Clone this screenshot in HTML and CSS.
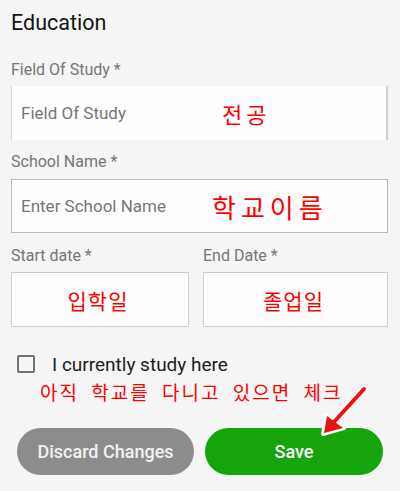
FILE: index.html
```html
<!DOCTYPE html>
<html lang="ko">
<head>
<meta charset="utf-8">
<title>Education</title>
<link rel="stylesheet" href="styles.css">
</head>
<body>
<div class="page">
  <h1 class="title">Education</h1>

  <div class="label first">Field Of Study *</div>
  <div class="field field-open">
    <span class="ph ph-study">Field Of Study</span>
    <span class="note note-study">전공</span>
  </div>

  <div class="label">School Name *</div>
  <div class="field field-school">
    <span class="ph ph-school">Enter School Name</span>
    <span class="note note-school">학교이름</span>
  </div>

  <div class="dates">
    <div class="date-col">
      <div class="label">Start date *</div>
      <div class="field date-box"><span class="note note-date">입학일</span></div>
    </div>
    <div class="date-col">
      <div class="label">End Date *</div>
      <div class="field date-box"><span class="note note-date">졸업일</span></div>
    </div>
  </div>

  <label class="check-row">
    <span class="checkbox"></span>
    <span class="check-text">I currently study here</span>
  </label>

  <div class="hint">아직 학교를 다니고 있으면 체크</div>

  <div class="actions">
    <button class="btn btn-discard">Discard Changes</button>
    <button class="btn btn-save">Save</button>
  </div>

  <svg class="arrow" width="400" height="491" viewBox="0 0 400 491">
    <line x1="364" y1="389" x2="334" y2="422" stroke="#fff" stroke-width="7" stroke-linecap="round"/>
    <polygon points="323,434 326,415 344,428" fill="#fff" stroke="#fff" stroke-width="4" stroke-linejoin="round"/>
    <line x1="364" y1="389" x2="334" y2="422" stroke="#ee1111" stroke-width="4" stroke-linecap="round"/>
    <polygon points="324,433 327,416 343,428" fill="#ee1111"/>
  </svg>
</div>
</body>
</html>
```

FILE: styles.css
```css
html, body {
  margin: 0;
  padding: 0;
  background: #f4f5f4;
}

.page {
  position: relative;
  width: 400px;
  height: 491px;
  box-sizing: border-box;
  padding: 11px 12px 0 11px;
  font-family: Roboto, "Liberation Sans", sans-serif;
  overflow: hidden;
}

.title {
  margin: 0;
  font-size: 21.5px;
  line-height: 24px;
  font-weight: 400;
  color: #151515;
}

.label {
  margin-top: 13px;
  font-size: 16px;
  line-height: 18px;
  color: #767676;
}

.label.first {
  margin-top: 26px;
}

.field {
  box-sizing: border-box;
  background: #fefefe;
  border: 1px solid #b9b9b9;
  display: flex;
  align-items: center;
  margin-top: 8px;
}

.field-open {
  margin-top: 7px;
  height: 54px;
  border-top: none;
  border-bottom: none;
  border-left: 1px solid #d8d8d8;
  border-right: 2px solid #cfcfcf;
}

.field-school {
  height: 54px;
}

.ph {
  font-size: 17px;
  color: #767676;
  padding-left: 9px;
  flex: 0 0 auto;
}

.ph-study {
  width: 201px;
}

.ph-school {
  width: 191px;
}

.note {
  font-family: "Noto Sans CJK KR", sans-serif;
  color: #ff0000;
  white-space: nowrap;
}

.note-study {
  font-size: 22px;
  letter-spacing: 4px;
}

.note-school {
  font-size: 26px;
  letter-spacing: 5px;
}

.dates {
  display: grid;
  grid-template-columns: 178px 1fr;
  column-gap: 14px;
}

.dates .label {
  margin-top: 14px;
}

.date-box {
  height: 55px;
  margin-top: 7px;
  justify-content: center;
  border-color: #cdcdcd;
}

.note-date {
  font-size: 21px;
  letter-spacing: 1px;
  margin-right: 4px;
}

.check-row {
  display: flex;
  align-items: center;
  height: 24px;
  margin-top: 25px;
  padding-left: 6px;
}

.checkbox {
  box-sizing: border-box;
  width: 18px;
  height: 18px;
  border: 2px solid #727272;
  border-radius: 2px;
  flex: 0 0 auto;
}

.check-text {
  margin-left: 17px;
  font-size: 19px;
  color: #1d1d1d;
}

.hint {
  margin-top: 5px;
  margin-left: 29px;
  font-family: "Noto Sans CJK KR", sans-serif;
  font-size: 19px;
  line-height: 22px;
  letter-spacing: 2px;
  word-spacing: 5px;
  color: #ff0000;
  white-space: nowrap;
}

.actions {
  display: flex;
  gap: 11px;
  margin-top: 25px;
  padding: 0 6px 0 6px;
}

.btn {
  flex: 0 0 177px;
  height: 47px;
  border: none;
  border-radius: 24px;
  font-family: Roboto, "Liberation Sans", sans-serif;
  font-size: 18px;
  font-weight: 500;
  color: #ffffff;
  padding: 0;
}

.btn-discard {
  background: #8c8c8c;
  color: #f2f2f2;
}

.btn-save {
  flex-basis: 178px;
  background: #15a40b;
}

.arrow {
  position: absolute;
  left: 0;
  top: 0;
  pointer-events: none;
}
```
